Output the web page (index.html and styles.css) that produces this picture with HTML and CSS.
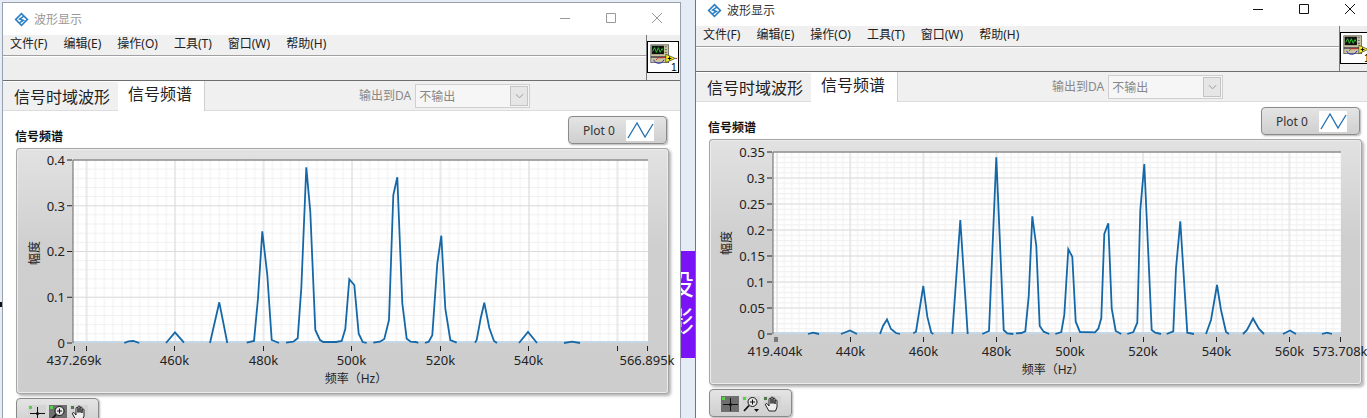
FILE: index.html
```html
<!DOCTYPE html>
<html lang="zh-CN">
<head>
  <meta charset="UTF-8">
  <title>波形显示</title>
  <link rel="stylesheet" href="styles.css">
</head>
<body>
  <svg class="defs">
    <symbol id="logo" viewBox="0 0 16 16">
      <path d="M8 .5 15.5 8 8 15.5 .5 8Z" fill="#2a7fc4"/>
      <path d="M8 3 13 8 8 13 3 8Z" fill="#fff"/>
      <path d="M10.5 4.5 6 7.5 10 9 5.5 11.5" fill="none" stroke="#2a7fc4" stroke-width="1.6"/>
    </symbol>
    <symbol id="vi" viewBox="0 0 32 32">
      <rect x="3" y="3" width="19" height="19" fill="#c9c4a0" stroke="#555" stroke-width=".8"/>
      <rect x="4" y="4" width="13" height="9" fill="#111"/>
      <path d="M5 10 7 6 9 11 11 6 13 11 15 7 16 9" fill="none" stroke="#2ecc2e"/>
      <path d="M18 5h2M18 8h2M18 11h2" stroke="#666" stroke-width="1.2"/>
      <path d="M3 16H20" stroke="#113" stroke-width="1.2"/>
      <path d="M6 19C8 24 15 24 17 19" fill="none" stroke="#2222bb"/>
      <path d="M9 19C10 15 14 18 19 16" fill="none" stroke="#d02020"/>
      <path d="M19 13 29 17.5 19 22Z" fill="#f7ef20" stroke="#333" stroke-width=".7"/>
      <path d="M29 17.5H31" stroke="#d02020"/>
      <path d="M21 17.5H25M23 15.5V19.5" stroke="#111" stroke-width="1.1"/>
      <text class="vi-num" x="24.5" y="31">1</text>
    </symbol>
    <symbol id="wave" viewBox="0 0 28 21">
      <rect width="28" height="21" fill="#fff"/>
      <path d="M2 18 11 3 19 17 27 4" fill="none" stroke="#1f6fb0" stroke-width="1.3"/>
    </symbol>
    <symbol id="cross" viewBox="0 0 18 16">
      <rect x="1" y="1" width="3" height="3" fill="#57d04a"/>
      <path d="M9.5 2V15M2 8.5H17" stroke="#111"/>
      <circle cx="9.5" cy="8.5" r="1.6" fill="#111"/>
    </symbol>
    <symbol id="zoomin" viewBox="0 0 18 16">
      <rect x="1" y="1" width="3" height="3" fill="#57d04a"/>
      <circle cx="10.5" cy="6" r="4.5" fill="#e8e8e8" stroke="#111"/>
      <path d="M8 6H13M10.5 3.500V8.500" stroke="#111"/>
      <path d="M7 9.500 2 15" stroke="#111" stroke-width="1.800"/>
      <path d="M12 13H17L14.500 16Z" fill="#111"/>
    </symbol>
    <symbol id="hand" viewBox="0 0 18 16">
      <rect x="1" y="1" width="3" height="3" fill="#4d7a48"/>
      <path d="M6 15 2.500 9C2 7.500 3.500 7 4.500 8L6 10V3.500C6 2 8 2 8 3.500V7.500V2C8 .5 10 .5 10 2V7.500V3C10 1.500 12 1.500 12 3V8V5C12 3.500 14 3.500 14 5V11L12.500 15Z" fill="#eee" stroke="#111" stroke-width=".9"/>
    </symbol>
    <symbol id="chevron" viewBox="0 0 10 6">
      <path d="M1 1 5 5 9 1" fill="none" stroke="#999" stroke-width="1.100"/>
    </symbol>
  </svg>

  <div class="speck"></div>
  <div class="promo"><span>设<br>影</span></div>

  <!-- left window -->
  <div class="window win-left inactive">
    <div class="titlebar">
      <svg class="logo"><use href="#logo"/></svg>
      <span class="title">波形显示</span>
      <div class="controls">
        <svg class="ctl" viewBox="0 0 46 14"><path d="M18 7.500H28"/></svg>
        <svg class="ctl" viewBox="0 0 46 14"><path d="M18.500 2.500H27.500V11.500H18.500Z"/></svg>
        <svg class="ctl" viewBox="0 0 46 14"><path d="M18 2 28 12M28 2 18 12"/></svg>
      </div>
    </div>
    <div class="topbar">
      <div class="bars">
        <div class="menu"><span>文件(F)</span><span>编辑(E)</span><span>操作(O)</span><span>工具(T)</span><span>窗口(W)</span><span>帮助(H)</span></div>
        <div class="toolbar"></div>
      </div>
      <div class="vi-cell"><svg class="vi-icon"><use href="#vi"/></svg></div>
    </div>
    <div class="tabs">
      <div class="tab">信号时域波形</div>
      <div class="tab current">信号频谱</div>
      <label class="da-label">输出到DA</label>
      <div class="combo"><span>不输出</span><i class="combo-btn"><svg class="chev"><use href="#chevron"/></svg></i></div>
    </div>
    <div class="panel">
      <div class="panel-head">
        <b class="graph-name">信号频谱</b>
        <div class="legend"><span>Plot 0</span><svg class="swatch"><use href="#wave"/></svg></div>
      </div>
      <div class="graph">
        <svg class="graph-svg" viewBox="16 148 653 246">
          <defs>
            <pattern id="minorA" patternUnits="userSpaceOnUse" x="85.6" y="342.5" width="8.848" height="9.15"><path d="M1 0V9.150M0 .5H8.848" class="grid-minor"/></pattern>
            <pattern id="majorA" patternUnits="userSpaceOnUse" x="85.6" y="342.5" width="88.48" height="45.75"><path d="M1 0V45.750M0 .5H88.480" class="grid-major"/></pattern>
          </defs>
          <rect x="73" y="160" width="575" height="183" fill="#fff"/>
          <rect x="73" y="160" width="575" height="183" fill="url(#minorA)"/>
          <rect x="73" y="160" width="575" height="183" fill="url(#majorA)"/>
          <rect x="73" y="341" width="575" height="2" class="base"/>
          <polyline class="trace" points="124.300,343 128.300,341.300 133.300,341 139.300,343"/>
          <polyline class="trace" points="166,343 175,332.300 184,342.700"/>
          <polyline class="trace" points="210,343 219.300,302.300 227.300,343"/>
          <polyline class="trace" points="246.700,342.700 254,341 258,298.300 262.300,231.300 267.300,275 271.700,340 279,343"/>
          <polyline class="trace" points="286,342.700 293.300,341.700 297.700,338.300 301.300,288.300 306.300,167.300 310.300,211.700 315.300,330 320,340 323.300,342 336,342 341.700,341 345.300,329 349.300,279.300 354.300,285 358.700,333.700 362.700,342 366.700,343"/>
          <polyline class="trace" points="373.300,342.700 380,341.700 384.300,339 389,320 393.300,195 397.300,177.300 402.300,303.300 406.700,338.700 410.700,341.700 416,342 418.300,343"/>
          <polyline class="trace" points="425,343 428.700,341.700 432.300,335.300 437.300,263.300 441.300,235.700 445.300,308.300 450.300,340 456.700,342.700"/>
          <polyline class="trace" points="475,342.700 476.700,340 480.700,318.300 484.300,302.700 489.300,328 494,341 497,343"/>
          <polyline class="trace" points="519,343 528,332 537,343"/>
          <polyline class="trace" points="564,343 572,341.700 580,343"/>
          <path class="axis" d="M73 343V160H648"/>
          <path class="ticks" d="M67 343H72M67 297.250H72M67 251.500H72M67 205.750H72M67 160H72M74.500 346V351M86.500 346V351M174.500 346V351M263.500 346V351M351.500 346V351M440.500 346V351M528.500 346V351M617.500 346V351M647.500 346V351"/>
          <g class="ylabels">
            <text x="65" y="347.500">0</text><text x="65" y="302">0.1</text><text x="65" y="256">0.2</text><text x="65" y="210.500">0.3</text><text x="65" y="165">0.4</text>
          </g>
          <g class="xlabels">
            <text x="74" y="364.500">437.269k</text><text x="174.500" y="364.500">460k</text><text x="263.500" y="364.500">480k</text><text x="351.500" y="364.500">500k</text><text x="440.500" y="364.500">520k</text><text x="528.500" y="364.500">540k</text><text x="647" y="364.500">566.895k</text>
          </g>
          <text class="axis-title" x="356" y="383">频率（Hz）</text>
          <text class="axis-title" transform="translate(39 253) rotate(-90)">幅度</text>
        </svg>
      </div>
      <div class="palette">
        <i class="tool"><svg><use href="#cross"/></svg></i>
        <i class="tool on"><svg><use href="#zoomin"/></svg></i>
        <i class="tool"><svg><use href="#hand"/></svg></i>
      </div>
    </div>
  </div>

  <!-- right window -->
  <div class="window win-right">
    <div class="titlebar">
      <svg class="logo"><use href="#logo"/></svg>
      <span class="title">波形显示</span>
      <div class="controls">
        <svg class="ctl" viewBox="0 0 46 14"><path d="M18 7.500H28"/></svg>
        <svg class="ctl" viewBox="0 0 46 14"><path d="M18.500 2.500H27.500V11.500H18.500Z"/></svg>
        <svg class="ctl" viewBox="0 0 46 14"><path d="M18 2 28 12M28 2 18 12"/></svg>
      </div>
    </div>
    <div class="topbar">
      <div class="bars">
        <div class="menu"><span>文件(F)</span><span>编辑(E)</span><span>操作(O)</span><span>工具(T)</span><span>窗口(W)</span><span>帮助(H)</span></div>
        <div class="toolbar"></div>
      </div>
      <div class="vi-cell"><svg class="vi-icon"><use href="#vi"/></svg></div>
    </div>
    <div class="tabs">
      <div class="tab">信号时域波形</div>
      <div class="tab current">信号频谱</div>
      <label class="da-label">输出到DA</label>
      <div class="combo"><span>不输出</span><i class="combo-btn"><svg class="chev"><use href="#chevron"/></svg></i></div>
    </div>
    <div class="panel">
      <div class="panel-head">
        <b class="graph-name">信号频谱</b>
        <div class="legend"><span>Plot 0</span><svg class="swatch"><use href="#wave"/></svg></div>
      </div>
      <div class="graph">
        <svg class="graph-svg" viewBox="709 139 653 246">
          <defs>
            <pattern id="minorB" patternUnits="userSpaceOnUse" x="776" y="333.500" width="7.32" height="5.2"><path d="M1 0V5.200M0 .5H7.320" class="grid-minor"/></pattern>
            <pattern id="majorB" patternUnits="userSpaceOnUse" x="776" y="333.500" width="73.2" height="26"><path d="M1 0V26M0 .5H73.200" class="grid-major"/></pattern>
          </defs>
          <rect x="773" y="152" width="568" height="182" fill="#fff"/>
          <rect x="773" y="152" width="568" height="182" fill="url(#minorB)"/>
          <rect x="773" y="152" width="568" height="182" fill="url(#majorB)"/>
          <rect x="773" y="332" width="568" height="2" class="base"/>
          <polyline class="trace" points="808,334 813,332.700 819,334"/>
          <polyline class="trace" points="841,334 850,330.500 857,334"/>
          <polyline class="trace" points="880,334 883,326 887,319.500 891,329 896,333 900,334"/>
          <polyline class="trace" points="913.300,333.300 916,331.700 923.300,286 927.300,316.700 931.300,332.700 933.300,334"/>
          <polyline class="trace" points="952.300,334 960.300,220 967.700,334"/>
          <polyline class="trace" points="982.300,334 989,331 996.300,157.300 1003.700,330 1007.300,333.300 1013.300,334"/>
          <polyline class="trace" points="1016,333.300 1021.300,333 1025.300,331.300 1028.700,296.700 1032.300,216.300 1036.300,246 1039.700,326 1043.700,331.700 1049.300,334"/>
          <polyline class="trace" points="1055.300,334 1061.300,332 1064.300,315 1068.300,249.300 1072.300,256.700 1075.700,321.700 1080,332 1095,332.300 1098.300,328.700 1101.300,318.300 1104.300,234 1108.300,223.300 1111.700,308.300 1115.700,331 1121.300,334"/>
          <polyline class="trace" points="1127.300,334 1133.300,332 1137.300,322.700 1140.300,210 1144.300,164 1151.700,330 1155.300,332.700 1161,334"/>
          <polyline class="trace" points="1166.700,334 1173.300,331.300 1176,268.300 1180.300,221.300 1187.300,332.700 1194,334"/>
          <polyline class="trace" points="1206,334 1211,320 1217,285 1221,310 1226,332 1229,334"/>
          <polyline class="trace" points="1243,334 1247,330 1253,318.500 1259,329 1264,334"/>
          <polyline class="trace" points="1283,334 1290,330.500 1296,334"/>
          <polyline class="trace" points="1322,334 1327,332.700 1332,334"/>
          <path class="axis" d="M773 334V152H1341"/>
          <path class="ticks" d="M767 334H772M767 308H772M767 282H772M767 256H772M767 230H772M767 204H772M767 178H772M767 152H772M775 337V342M777 337V342M850.500 337V342M923.500 337V342M996.500 337V342M1070.500 337V342M1143.500 337V342M1216.500 337V342M1289.500 337V342M1340.500 337V342"/>
          <g class="ylabels">
            <text x="765" y="338.500">0</text><text x="765" y="313">0.05</text><text x="765" y="287">0.1</text><text x="765" y="261">0.15</text><text x="765" y="235">0.2</text><text x="765" y="209">0.25</text><text x="765" y="183">0.3</text><text x="765" y="157">0.35</text>
          </g>
          <g class="xlabels">
            <text x="775" y="355.500">419.404k</text><text x="850.500" y="355.500">440k</text><text x="923.500" y="355.500">460k</text><text x="996.500" y="355.500">480k</text><text x="1070" y="355.500">500k</text><text x="1143" y="355.500">520k</text><text x="1216.500" y="355.500">540k</text><text x="1289.500" y="355.500">560k</text><text x="1340" y="355.500">573.708k</text>
          </g>
          <text class="axis-title" x="1053" y="374">频率（Hz）</text>
          <text class="axis-title" transform="translate(731 243) rotate(-90)">幅度</text>
        </svg>
      </div>
      <div class="palette">
        <i class="tool on"><svg><use href="#cross"/></svg></i>
        <i class="tool"><svg><use href="#zoomin"/></svg></i>
        <i class="tool"><svg><use href="#hand"/></svg></i>
      </div>
    </div>
  </div>
</body>
</html>
```

FILE: styles.css
```css
html, body {
  margin: 0;
  height: 100%;
}
body {
  position: relative;
  overflow: hidden;
  background: #e6ecf6;
  font-family: "Noto Sans", "Noto Sans CJK SC", sans-serif;
  font-size: 12px;
  color: #222;
}
.defs {
  display: none;
}
.vi-num {
  font-family: "Liberation Sans", sans-serif;
  font-size: 11px;
  fill: #000;
}

/* things on the desktop behind the windows */
.speck {
  position: absolute;
  left: 0;
  top: 302px;
  width: 2px;
  height: 5px;
  background: #111;
}
.promo {
  position: absolute;
  left: 680px;
  top: 251px;
  width: 15px;
  height: 107px;
  overflow: hidden;
  background: #7a14f7;
  color: #fff;
}
.promo span {
  display: block;
  width: 29px;
  margin: 14px 0 0 -14px;
  font-size: 28px;
  line-height: 37px;
  font-family: "Noto Sans CJK SC", sans-serif;
}

/* windows */
.window {
  position: absolute;
  width: 677px;
  overflow: hidden;
  background: #fff;
  border: 1px solid #98a1ad;
}
.win-left {
  left: 2px;
  top: 2px;
  height: 415px;
}
.win-right {
  left: 695px;
  top: -7px;
  height: 424px;
  border-color: #6f7680;
}
.titlebar {
  display: flex;
  align-items: center;
  height: 32px;
  padding-left: 11px;
}
.logo {
  width: 15px;
  height: 15px;
  margin-right: 5px;
}
.title {
  color: #333;
}
.inactive .title {
  color: #999;
}
.controls {
  display: flex;
  margin-left: auto;
  margin-bottom: 2px;
}
.ctl {
  display: block;
  width: 46px;
  height: 14px;
  fill: none;
  stroke: #111;
}
.inactive .ctl {
  stroke: #999;
}

.topbar {
  display: flex;
  height: 45px;
  border-bottom: 1px solid #6e6e6e;
}
.bars {
  flex: 1;
  background: #eeeeee;
}
.menu {
  display: flex;
  gap: 16px;
  height: 20px;
  padding-left: 7px;
  background: #f0f0f0;
  border-bottom: 1px solid #a0a0a0;
  line-height: 18px;
  box-shadow: 0 1px 0 #fff;
}
.toolbar {
  height: 23px;
  margin-top: 1px;
}
.vi-cell {
  width: 34px;
  padding: 6px 0 0 0;
  box-sizing: border-box;
  background: #eeeeee;
  border-left: 1px solid #7a7a7a;
}
.vi-icon {
  display: block;
  width: 30px;
  height: 30px;
  background: #fff;
  border: 1px solid #000;
}

/* tabs */
.tabs {
  display: flex;
  height: 29px;
  background: #f0f0f0;
  border-bottom: 1px solid #dcdcdc;
}
.tab {
  width: 104px;
  padding-left: 11px;
  font-size: 16px;
  line-height: 30px;
  border-top: 1px solid #fff;
  height: 28px;
}
.tab.current {
  width: 76px;
  padding-left: 10px;
  height: 30px;
  line-height: 27px;
  background: #fff;
  border-top: 0;
  border-right: 1px solid #cfcfcf;
}
.da-label {
  margin-left: 154px;
  line-height: 29px;
  color: #888;
}
.combo {
  display: flex;
  align-items: center;
  box-sizing: border-box;
  width: 115px;
  height: 24px;
  margin: 3px 0 0 4px;
  padding-left: 3px;
  background: #f6f6f6;
  border: 1px solid #cfcfcf;
  color: #888;
}
.combo-btn {
  display: flex;
  align-items: center;
  justify-content: center;
  width: 16px;
  height: 18px;
  margin-left: auto;
  margin-right: 1px;
  background: #e6e6e6;
  border: 1px solid #c4c4c4;
}
.chev {
  width: 9px;
  height: 6px;
}

/* front panel */
.panel {
  padding-left: 13px;
}
.panel-head {
  display: flex;
  justify-content: space-between;
  width: 653px;
  height: 37px;
}
.graph-name {
  margin: 17px 0 0 -1px;
  line-height: 18px;
  color: #111;
}
.legend {
  display: flex;
  align-items: center;
  box-sizing: border-box;
  width: 99px;
  height: 28px;
  margin: 5px 2px 0 0;
  padding-left: 14px;
  background: linear-gradient(#e4e4e4, #cfcfcf);
  border: 1px solid #8a8a8a;
  border-radius: 4px;
  box-shadow: 1px 1px 2px rgba(0, 0, 0, 0.3);
  color: #333;
}
.swatch {
  width: 28px;
  height: 21px;
  margin-left: 11px;
}
.graph {
  width: 653px;
  height: 246px;
  background: linear-gradient(#e2e2e2, #cfcfcf 40%, #cdcdcd);
  border-radius: 4px;
  box-shadow: inset 0 0 0 1px #a6a6a6, inset 0 0 0 2px #ececec, 2px 2px 3px rgba(0, 0, 0, 0.3);
}
.graph-svg {
  display: block;
  width: 653px;
  height: 246px;
  overflow: visible;
}
.grid-minor {
  fill: none;
  stroke: #f0f0f0;
}
.grid-major {
  fill: none;
  stroke: #dcdcdc;
}
.base {
  fill: #c4d8e8;
}
.trace {
  fill: none;
  stroke: #1568a8;
  stroke-width: 1.8;
}
.axis {
  fill: none;
  stroke: #666;
}
.ticks {
  stroke: #222;
  fill: none;
}
.graph-svg text {
  font-size: 13px;
  fill: #222;
}
.ylabels text {
  text-anchor: end;
}
.xlabels text {
  text-anchor: middle;
}
.graph-svg .axis-title {
  font-size: 12px;
  text-anchor: middle;
}

.palette {
  display: flex;
  gap: 3px;
  box-sizing: border-box;
  width: 83px;
  height: 28px;
  margin-top: 4px;
  padding: 6px 0 0 11px;
  background: linear-gradient(#e4e4e4, #cfcfcf);
  border: 1px solid #8a8a8a;
  border-radius: 4px;
  box-shadow: 1px 1px 2px rgba(0, 0, 0, 0.3);
}
.tool {
  display: block;
  width: 18px;
  height: 16px;
  background: #d4d4d4;
}
.tool.on {
  background: #6f6f6f;
}
.tool svg {
  display: block;
  width: 18px;
  height: 16px;
}
```
